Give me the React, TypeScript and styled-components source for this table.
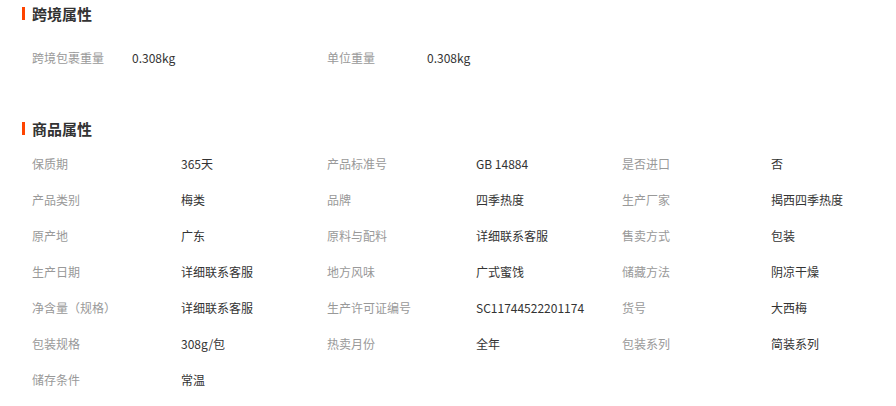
import { Fragment } from "react";
import styled, { createGlobalStyle } from "styled-components";

const GlobalStyle = createGlobalStyle`
    body {
        margin: 0;
        background: #fff;
        font-family: "Noto Sans CJK SC", "Liberation Sans", sans-serif;
        font-size: 12px;
    }
`;

//#region data

type Attr = [string, string];

const crossBorder: Attr[] = [
    ["跨境包裹重量", "0.308kg"],
    ["单位重量", "0.308kg"],
];

const goods: Attr[] = [
    ["保质期", "365天"],
    ["产品标准号", "GB 14884"],
    ["是否进口", "否"],
    ["产品类别", "梅类"],
    ["品牌", "四季热度"],
    ["生产厂家", "揭西四季热度"],
    ["原产地", "广东"],
    ["原料与配料", "详细联系客服"],
    ["售卖方式", "包装"],
    ["生产日期", "详细联系客服"],
    ["地方风味", "广式蜜饯"],
    ["储藏方法", "阴凉干燥"],
    ["净含量（规格）", "详细联系客服"],
    ["生产许可证编号", "SC11744522201174"],
    ["货号", "大西梅"],
    ["包装规格", "308g/包"],
    ["热卖月份", "全年"],
    ["包装系列", "简装系列"],
    ["储存条件", "常温"],
];

//#endregion

//#region parts

const Page = styled.div`
    width: 896px;
    padding: 0 0 0 22px;
    box-sizing: border-box;
`;

const Section = styled.section<{ $gap: number }>`
    margin-bottom: ${props => props.$gap}px;
`;

const Title = styled.h3<{ $after: number }>`
    display: flex;
    align-items: center;
    height: 26px;
    margin: 0 0 ${props => props.$after}px;
    font-size: 15px;
    font-weight: bold;
    color: #333;

    &::before {
        content: "";
        width: 3px;
        height: 13px;
        margin-right: 7px;
        background: #ff4400;
    }
`;

const Grid = styled.dl<{ $label: number }>`
    display: grid;
    grid-template-columns: repeat(3, ${props => props.$label}px ${props => 295 - props.$label}px);
    margin: 0;
    padding-left: 10px;
`;

const Label = styled.dt`
    height: 36px;
    line-height: 38px;
    color: #999;
    white-space: nowrap;
`;

const Value = styled.dd`
    height: 36px;
    line-height: 38px;
    margin: 0;
    color: #333;
    white-space: nowrap;
`;

//#endregion

function AttrGrid({ items, label }: { items: Attr[]; label: number }) {
    return (
        <Grid $label={label}>
            {items.map(([k, v]) => (
                <Fragment key={k}>
                    <Label>{k}</Label>
                    <Value>{v}</Value>
                </Fragment>
            ))}
        </Grid>
    );
}

export default function App() {
    return (
        <Page>
            <GlobalStyle />
            <Section $gap={40}>
                <Title $after={13}>跨境属性</Title>
                <AttrGrid items={crossBorder} label={100} />
            </Section>
            <Section $gap={0}>
                <Title $after={4}>商品属性</Title>
                <AttrGrid items={goods} label={149} />
            </Section>
        </Page>
    );
}
